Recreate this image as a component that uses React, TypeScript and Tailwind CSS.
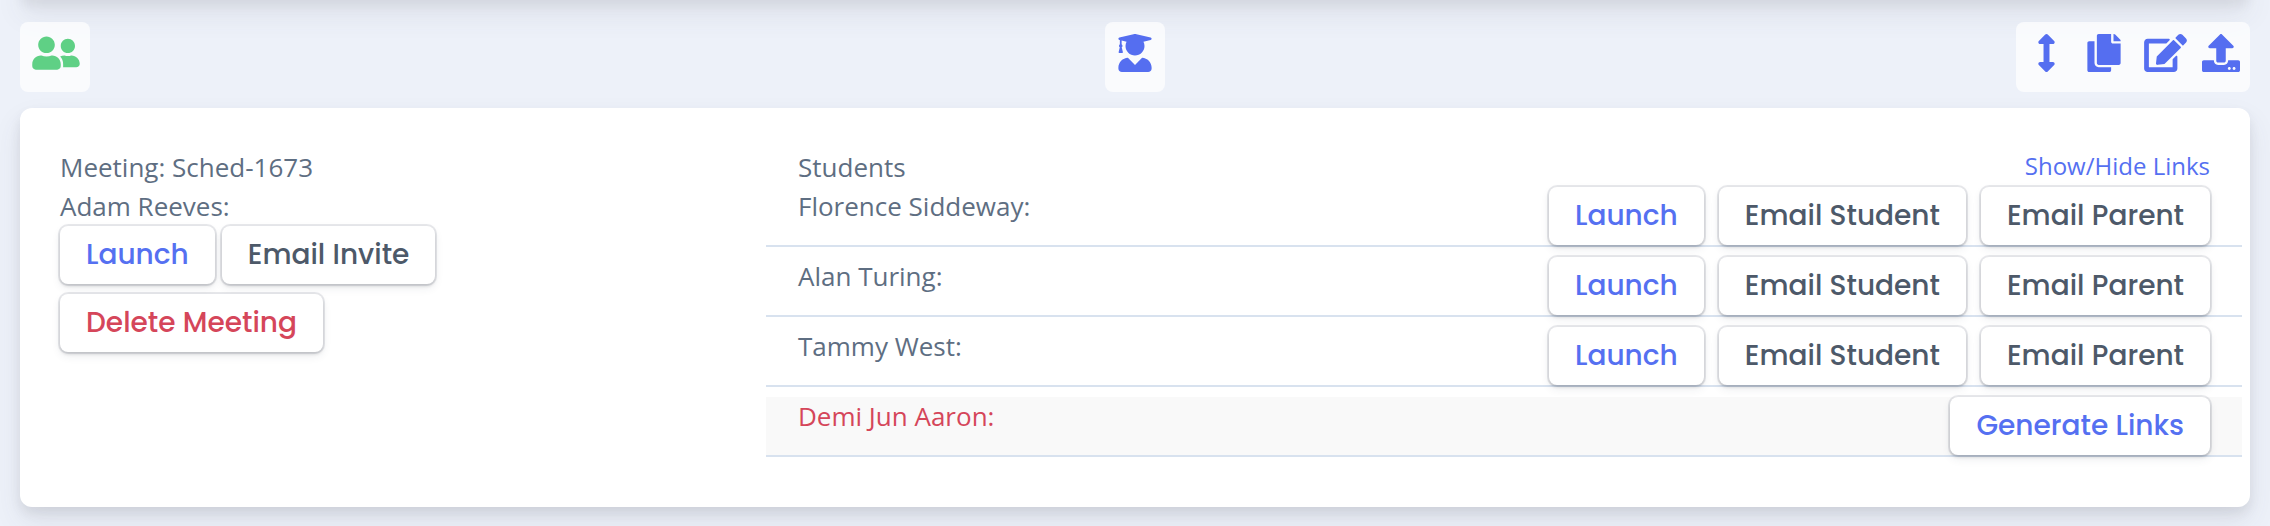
import type { ReactNode } from "react";
import { FaArrowsAltV, FaCopy, FaEdit, FaUpload, FaUserFriends, FaUserGraduate } from "react-icons/fa";

const cardShadow = "shadow-[0_14px_28px_rgba(65,69,88,0.1),0_6px_12px_rgba(0,0,0,0.07)]";

const tones = {
  primary: "text-[#5570f1]",
  neutral: "text-[#4d5969]",
  danger: "text-[#d5465a]",
};

function ActionButton({ tone = "neutral", children }: { tone?: keyof typeof tones; children: ReactNode }) {
  return (
    <button
      type="button"
      className={`h-[58px] rounded-lg bg-white px-[26px] text-center font-['Poppins','Inter',sans-serif] text-[28px] leading-[42px] font-medium whitespace-nowrap shadow-[0_0_0_2px_rgba(43,45,80,0.1),0_4px_10px_rgba(43,45,80,0.08),0_2px_3px_rgba(0,0,0,0.07),0_2px_4px_rgba(0,0,0,0.08)] ${tones[tone]}`}
    >
      {children}
    </button>
  );
}

function IconButton({ label, width, children }: { label: string; width: string; children: ReactNode }) {
  return (
    <button type="button" aria-label={label} className={`flex justify-center ${width}`}>
      {children}
    </button>
  );
}

const students = ["Florence Siddeway:", "Alan Turing:", "Tammy West:"];

export default function App() {
  return (
    <div className="min-h-screen overflow-hidden bg-[#edf1f9] px-5 font-['Open_Sans',sans-serif] text-[26px] leading-[39px] text-[#5e6e82]">
      <div className={`-mt-5 h-5 rounded-b-xl bg-white ${cardShadow}`} />

      <header className="mt-[22px] grid grid-cols-[1fr_auto_1fr] text-[#556ef0]">
        <button
          type="button"
          aria-label="Participants"
          className="flex h-[70px] w-[70px] justify-end justify-self-start rounded-lg bg-white/70 pt-3 pr-2.5 text-[#5fd085]"
        >
          <FaUserFriends className="h-[38px] w-12" />
        </button>
        <button type="button" aria-label="Students" className="flex h-[70px] w-[60px] justify-center rounded-lg bg-white/70 pt-3">
          <FaUserGraduate className="h-[38px] w-[34px]" />
        </button>
        <div className="flex h-[70px] items-start justify-self-end rounded-lg bg-white/70 pt-3 pr-[5px] pl-px">
          <IconButton label="Expand" width="w-[58px]">
            <FaArrowsAltV className="h-[38px] w-[19px]" />
          </IconButton>
          <IconButton label="Copy" width="w-[58px]">
            <FaCopy className="h-[38px] w-[34px]" />
          </IconButton>
          <IconButton label="Edit" width="w-[64px]">
            <FaEdit className="h-[38px] w-[43px]" />
          </IconButton>
          <IconButton label="Upload" width="w-[48px]">
            <FaUpload className="h-[38px] w-[38px]" />
          </IconButton>
        </div>
      </header>

      <main className={`mt-4 grid grid-cols-3 rounded-xl bg-white px-2 pt-10 pb-[50px] ${cardShadow}`}>
        <section className="px-8">
          <p>Meeting: Sched-1673</p>
          <p>Adam Reeves:</p>
          <div className="flex flex-col gap-2.5">
            <div className="flex gap-[7px]">
              <ActionButton tone="primary">Launch</ActionButton>
              <ActionButton>Email Invite</ActionButton>
            </div>
            <div className="flex">
              <ActionButton tone="danger">Delete Meeting</ActionButton>
            </div>
          </div>
        </section>

        <section className="col-span-2">
          <div className="flex justify-between px-8">
            <h2>Students</h2>
            <a href="#links" className="text-2xl leading-[36px] text-[#5570f1]">Show/Hide Links</a>
          </div>
          <ul className="flex flex-col gap-2.5">
            {students.map((name) => (
              <li key={name} className="flex items-start justify-between border-b-2 border-[#d8e2ef] px-8">
                <span>{name}</span>
                <div className="flex gap-[15px]">
                  <ActionButton tone="primary">Launch</ActionButton>
                  <ActionButton>Email Student</ActionButton>
                  <ActionButton>Email Parent</ActionButton>
                </div>
              </li>
            ))}
            <li className="flex items-start justify-between border-b-2 border-[#d8e2ef] bg-[#f9f9f9] px-8 text-[#d5465a]">
              <span>Demi Jun Aaron:</span>
              <ActionButton tone="primary">Generate Links</ActionButton>
            </li>
          </ul>
        </section>
      </main>
    </div>
  );
}
